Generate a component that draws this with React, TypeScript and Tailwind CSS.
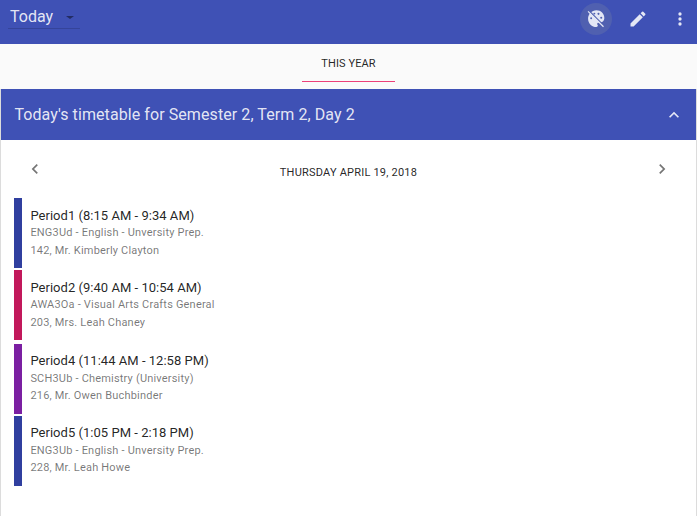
type Period = { title: string; course: string; room: string; bar: string; gap: string; lines: string; courseLine: string; roomLine: string };

const periods: Period[] = [
  { title: "Period1 (8:15 AM - 9:34 AM)", course: "ENG3Ud - English - Unversity Prep.", room: "142, Mr. Kimberly Clayton", bar: "bg-[#303f9f]", gap: "mb-[2px]", lines: "pt-[9px]", courseLine: "leading-[18px]", roomLine: "leading-[17px]" },
  { title: "Period2 (9:40 AM - 10:54 AM)", course: "AWA3Oa - Visual Arts Crafts General", room: "203, Mrs. Leah Chaney", bar: "bg-[#c2185b]", gap: "mb-1", lines: "pt-[9px]", courseLine: "leading-[18px]", roomLine: "leading-[17px]" },
  { title: "Period4 (11:44 AM - 12:58 PM)", course: "SCH3Ub - Chemistry (University)", room: "216, Mr. Owen Buchbinder", bar: "bg-[#7b1fa2]", gap: "mb-[2px]", lines: "pt-2", courseLine: "leading-[20px]", roomLine: "leading-[14px]" },
  { title: "Period5 (1:05 PM - 2:18 PM)", course: "ENG3Ub - English - Unversity Prep.", room: "228, Mr. Leah Howe", bar: "bg-[#303f9f]", gap: "", lines: "pt-2", courseLine: "leading-[20px]", roomLine: "leading-[14px]" },
];

function Toolbar() {
  return (
    <header className="flex h-11 items-start bg-[#3f51b5] pl-2 text-white/87">
      <div className="flex h-[29px] w-[72px] items-start border-b border-black/15 pt-[5px] pl-[2px]">
        <span className="w-[56px] text-[16px] leading-6">Today</span>
        <svg className="mt-[11px] h-[3px] w-[8px] text-[#232c63]" viewBox="0 0 8 3" fill="currentColor">
          <path d="M0 0h8L4 3z" />
        </svg>
      </div>
      <div className="ml-auto flex items-center pt-[3px]">
        <button className="flex size-8 items-center justify-center rounded-full bg-[#5060b0]">
          <svg className="size-[20px]" viewBox="0 0 24 24">
            <path fill="#e4e7f5" d="M12.500 1.500C7 1.500 2.500 6 2.500 11.600s4.500 10 10 10c1 0 1.700-.8 1.700-1.700 0-.4-.15-.74-.39-1.010-.23-.26-.38-.61-.38-.99 0-.83.67-1.500 1.500-1.500H16.500c3 0 5.500-2 5.500-5.200C22 5.500 18 1.500 12.500 1.500z" />
            <g fill="#5060b0">
              <circle cx="6.200" cy="11" r="1.150" />
              <circle cx="10" cy="5.500" r="1.150" />
              <circle cx="15" cy="5.800" r="1.250" />
              <circle cx="18.300" cy="10.500" r="1.250" />
            </g>
            <path stroke="#5060b0" strokeWidth="1.500" d="M4.500 3 21.800 20.300" />
            <path stroke="#e4e7f5" strokeWidth="1.500" d="M2.500 2.800 21 21.300" />
          </svg>
        </button>
        <button className="ml-4 flex size-5 items-center justify-center">
          <svg className="size-5" viewBox="0 0 24 24" fill="#e4e7f5">
            <path d="M3 17.250V21h3.750L17.810 9.940l-3.750-3.750L3 17.250zM20.710 7.040a1 1 0 0 0 0-1.410l-2.340-2.340a1 1 0 0 0-1.410 0l-1.830 1.830 3.750 3.750 1.830-1.830z" />
          </svg>
        </button>
        <button className="mr-[7.500px] ml-[21.500px] flex size-5 items-center justify-center">
          <svg className="size-5" viewBox="0 0 24 24" fill="#e4e7f5">
            <path d="M12 8a2 2 0 1 0 0-4 2 2 0 0 0 0 4zm0 2a2 2 0 1 0 0 4 2 2 0 0 0 0-4zm0 6a2 2 0 1 0 0 4 2 2 0 0 0 0-4z" />
          </svg>
        </button>
      </div>
    </header>
  );
}

function Chevron({ path, className }: { path: string; className: string }) {
  return (
    <svg className={className} viewBox="0 0 24 24" fill="currentColor">
      <path d={path} />
    </svg>
  );
}

export default function App() {
  return (
    <div className="flex h-[516px] w-[697px] flex-col overflow-hidden bg-[#fafafa] font-['Roboto',sans-serif] text-black/87">
      <Toolbar />
      <nav className="flex h-[45px] shrink-0 justify-center">
        <div className="h-[38px] w-[93px] border-b border-[#ec407a] pt-3 text-center text-[11px] leading-4 tracking-[0.1px]">THIS YEAR</div>
      </nav>
      <main className="flex-1 border-x border-[#dcdcdc] bg-white">
        <div className="flex h-[51px] items-center justify-between bg-[#3f51b5] pr-3 pl-[13.400px] text-white/87">
          <h1 className="text-[16px] leading-6 tracking-[0.08px]">Today's timetable for Semester 2, Term 2, Day 2</h1>
          <Chevron className="size-5" path="M12 8l-6 6 1.410 1.410L12 10.830l4.590 4.580L18 14z" />
        </div>
        <div className="flex h-[58px] items-start justify-between px-6 pt-[19px]">
          <Chevron className="size-5 text-[#757575]" path="M15.410 7.410 14 6l-6 6 6 6 1.410-1.410L10.830 12z" />
          <div className="pt-[6px] text-[11px] leading-4 tracking-[0.21px]">THURSDAY APRIL 19, 2018</div>
          <Chevron className="size-5 text-[#757575]" path="M10 6 8.590 7.410 13.170 12l-4.580 4.590L10 18l6-6z" />
        </div>
        <ul className="pl-[13px]">
          {periods.map((p) => (
            <li key={p.title} className={`flex h-[70px] ${p.gap}`}>
              <span className={`w-2 ${p.bar}`} />
              <div className={`pl-[8.400px] ${p.lines}`}>
                <h2 className="text-[13px] leading-[17px] tracking-[0.03px]">{p.title}</h2>
                <p className={`text-[11px] tracking-[0.190px] text-black/54 ${p.courseLine}`}>{p.course}</p>
                <p className={`text-[11px] tracking-[0.190px] text-black/54 ${p.roomLine}`}>{p.room}</p>
              </div>
            </li>
          ))}
        </ul>
      </main>
    </div>
  );
}
